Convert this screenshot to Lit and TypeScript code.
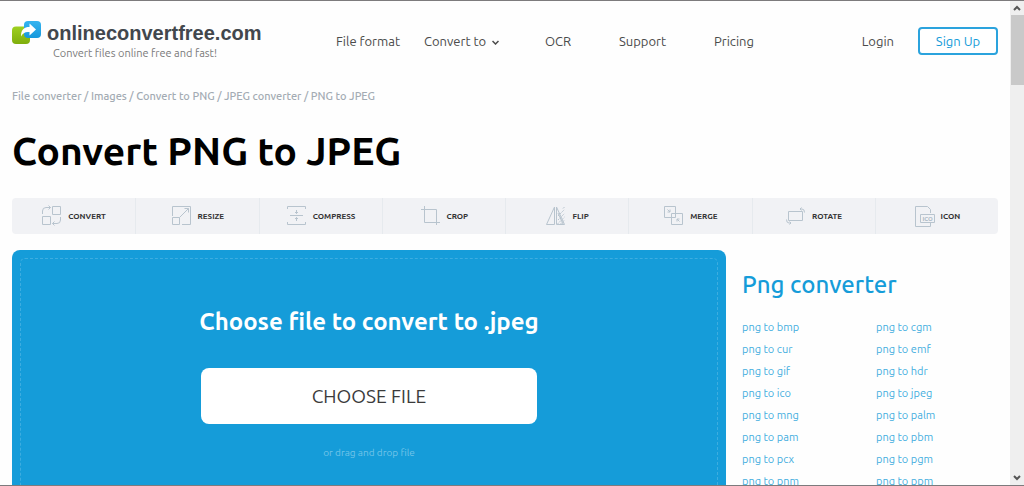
import { LitElement, html, css, svg } from "lit";
import { customElement } from "lit/decorators.js";

const tools = [
  {
    name: "Convert",
    icon: svg`<path d="M11.5 1.5h8v8h-8zM1.5 11.5h8v8h-8z"/><path d="M1.5 9V6q0-3.500 3.500-3.500h4.500M7.500.5l2 2-2 2M19.500 12v3q0 3.500-3.500 3.500h-4.500M13.500 16.500l-2 2 2 2"/>`,
  },
  {
    name: "Resize",
    icon: svg`<path d="M1.500 11V1.500h18v18H11M1.500 12.500h7v7h-7zM8.500 12.500l9-9M13.500 3.500h4v4"/>`,
  },
  {
    name: "Compress",
    icon: svg`<path d="M1.500 4V1.500h18V4M1.500 17v2.500h18V17M4 10.500h13M10.500 5v3.500M9 7l1.500 1.500L12 7M10.500 16v-3.500M9 14l1.500-1.500L12 14"/>`,
  },
  {
    name: "Crop",
    icon: svg`<path d="M4.500 1v16.500H20M1 4.500h15.500V20"/>`,
  },
  {
    name: "Flip",
    icon: svg`<path d="M9.500 2v17.500h-8zM11.500 2v17.500h8L11.500 2"/><path d="M12.500 19l7-7M15.500 19l4-4M13 15l6.500-6.500M13 11l6.500-6.500" stroke-dasharray="2 1"/><path d="M18 3.500l1.500-1.500M13 8l5 11"/>`,
  },
  {
    name: "Merge",
    icon: svg`<path d="M1.500 1.500h11v11h-11zM8.500 8.500h11v11h-11zM4.500 4.500l2.500 2.500M7 4.500V7H4.500M16.500 16.500L14 14M14 16.500V14h2.500"/>`,
  },
  {
    name: "Rotate",
    icon: svg`<path d="M3.500 6.500h14v9h-14zM15 4h2q2.500 0 2.500 3.500M16.500 2.500L15 4l1.500 1.500M6 18H4q-2.500 0-2.500-3.500M4.500 16.500L6 18l-1.500 1.500"/>`,
  },
  {
    name: "Icon",
    icon: svg`<path d="M16.500 8V4.500l-3-3H1.500v20h15V18M6.500 9.500h14v8h-14z"/><text class="ico" x="13.500" y="16" text-anchor="middle">ICO</text>`,
  },
];

const formats = [
  ["bmp", "cgm"],
  ["cur", "emf"],
  ["gif", "hdr"],
  ["ico", "jpeg"],
  ["mng", "palm"],
  ["pam", "pbm"],
  ["pcx", "pgm"],
  ["pnm", "ppm"],
];

@customElement("app-root")
export class AppRoot extends LitElement {
  static styles = css`
    :host {
      display: grid;
      grid-template-columns: minmax(0, 1fr) 14px;
      height: 100vh;
      box-sizing: border-box;
      overflow: hidden;
      border-top: 1px solid #7d7b7d;
      border-bottom: 1px solid #7d7b7d;
      background: #fefefe;
      color: #4b4b4b;
      font-family: Ubuntu, "Noto Sans", sans-serif;
      font-size: 13px;
    }
    * {
      box-sizing: border-box;
    }
    a {
      color: inherit;
      text-decoration: none;
    }
    .page {
      padding: 0 12px;
      overflow: hidden;
    }
    header {
      display: flex;
      align-items: center;
      height: 80px;
    }
    .brand {
      width: 324px;
      display: grid;
      grid-template-columns: 35px 1fr;
      align-items: center;
    }
    .mark {
      width: 30px;
      height: 24px;
    }
    .name {
      font: bold 20px/24px "Liberation Sans", Arial, sans-serif;
      color: #42474d;
    }
    .tag {
      grid-column: 1 / -1;
      padding-left: 41px;
      font-size: 11px;
      line-height: 16px;
      color: #7b7b7b;
    }
    nav {
      display: grid;
      grid-template-columns: 88px 121px 74px 95px auto;
      line-height: 20px;
    }
    .chevron {
      width: 7px;
      height: 5px;
      margin-left: 6px;
      vertical-align: 1px;
      fill: none;
      stroke: #4b4b4b;
      stroke-width: 1.500;
    }
    .account {
      display: flex;
      align-items: center;
      gap: 24px;
      margin-left: auto;
      line-height: 20px;
    }
    .signup {
      width: 80px;
      height: 28px;
      padding: 0;
      border: 2px solid #2ba3dd;
      border-radius: 4px;
      background: #fff;
      color: #159cd9;
      font: inherit;
    }
    .crumbs {
      font-size: 11px;
      font-weight: 500;
      line-height: 16px;
      padding-top: 7px;
      color: #a3abb3;
    }
    h1 {
      margin: 23px 0;
      font-size: 39px;
      line-height: 48px;
      color: #000;
    }
    .tools {
      display: grid;
      grid-template-columns: repeat(8, 1fr);
      height: 36px;
      border-radius: 4px;
      background: #f1f2f5;
      overflow: hidden;
    }
    .tool {
      display: flex;
      align-items: center;
      justify-content: center;
      gap: 5px;
      color: #333;
      font-size: 8px;
      font-weight: bold;
      text-transform: uppercase;
    }
    .tool + .tool {
      border-left: 1px solid #e6eaee;
    }
    .tool svg {
      width: 22px;
      height: 22px;
      fill: none;
      stroke: #b8c4ce;
      stroke-width: 1;
    }
    .tool .ico {
      font-size: 6px;
      fill: #a9b7c3;
      stroke: none;
    }
    main {
      display: grid;
      grid-template-columns: minmax(0, 1fr) 256px;
      gap: 16px;
      padding-top: 16px;
    }
    .drop {
      padding: 8px;
      border-radius: 8px;
      background: #159cd9;
      min-height: 320px;
    }
    .zone {
      display: flex;
      flex-direction: column;
      align-items: center;
      height: 100%;
      padding-top: 47px;
      border: 1px dashed #3dade0;
      border-radius: 5px;
    }
    .zone h2 {
      margin: 0;
      font-size: 24px;
      line-height: 32px;
      color: #fff;
    }
    .choose {
      width: 336px;
      height: 56px;
      margin: 30px 0 20px;
      border: 0;
      border-radius: 8px;
      background: #fff;
      color: #3b3b3b;
      font: inherit;
      font-size: 19px;
    }
    .hint {
      margin: 0;
      font-size: 10px;
      line-height: 18px;
      color: #73c4e8;
    }
    aside h2 {
      margin: 18px 0 15px;
      font-size: 24px;
      font-weight: 500;
      line-height: 34px;
      color: #159cd9;
    }
    .formats {
      display: grid;
      grid-template-columns: 134px 1fr;
      grid-auto-rows: 22px;
      font-size: 11px;
      line-height: 20px;
      color: #45aedf;
    }
    .scroll {
      display: flex;
      flex-direction: column;
      align-items: center;
      background: #efefef;
    }
    .scroll svg {
      width: 14px;
      height: 14px;
      fill: none;
      stroke: #555;
      stroke-width: 2;
    }
    .thumb {
      width: 13px;
      height: 70px;
      background: #c9c9c9;
      margin-bottom: auto;
    }
  `;

  render() {
    return html`
      <div class="page">
        <header>
          <a class="brand" href="#">
            <svg class="mark" viewBox="0 0 30 24" aria-hidden="true">
              <defs>
                <linearGradient id="g" x2="0" y2="1"><stop stop-color="#9fd020" /><stop offset="1" stop-color="#7fae0c" /></linearGradient>
                <linearGradient id="b" x2="0" y2="1"><stop stop-color="#35b4f0" /><stop offset="1" stop-color="#1698dc" /></linearGradient>
              </defs>
              <rect y="5.500" width="18" height="17.500" rx="4" fill="url(#g)" />
              <rect x="12" y="0" width="17" height="17" rx="4" fill="url(#b)" />
              <path d="M9 15.500C9 8.500 12 6 17.500 6V2.500L24 8.500l-6.500 6V11C13 10.500 11 12 9 15.500z" fill="#fff" />
            </svg>
            <span class="name">onlineconvertfree.com</span>
            <span class="tag">Convert files online free and fast!</span>
          </a>
          <nav>
            <a href="#">File format</a>
            <a href="#">Convert to<svg class="chevron" viewBox="0 0 7 5" aria-hidden="true"><path d="M.5 1l3 3 3-3" /></svg></a>
            <a href="#">OCR</a>
            <a href="#">Support</a>
            <a href="#">Pricing</a>
          </nav>
          <div class="account">
            <a href="#">Login</a>
            <button class="signup">Sign Up</button>
          </div>
        </header>
        <div class="crumbs">
          <a href="#">File converter</a> / <a href="#">Images</a> / <a href="#">Convert to PNG</a> / <a href="#">JPEG converter</a> / PNG to JPEG
        </div>
        <h1>Convert PNG to JPEG</h1>
        <div class="tools">
          ${tools.map(
            (t) => html`<a class="tool" href="#"><svg viewBox="0 0 22 22" aria-hidden="true">${t.icon}</svg>${t.name}</a>`
          )}
        </div>
        <main>
          <section class="drop">
            <div class="zone">
              <h2>Choose file to convert to .jpeg</h2>
              <button class="choose">CHOOSE FILE</button>
              <p class="hint">or drag and drop file</p>
            </div>
          </section>
          <aside>
            <h2>Png converter</h2>
            <div class="formats">
              ${formats.flat().map((f) => html`<a href="#">png to ${f}</a>`)}
            </div>
          </aside>
        </main>
      </div>
      <div class="scroll" aria-hidden="true">
        <svg viewBox="0 0 14 14"><path d="M4 9l3-3 3 3" /></svg>
        <div class="thumb"></div>
        <svg viewBox="0 0 14 14"><path d="M4 5l3 3 3-3" /></svg>
      </div>
    `;
  }
}
